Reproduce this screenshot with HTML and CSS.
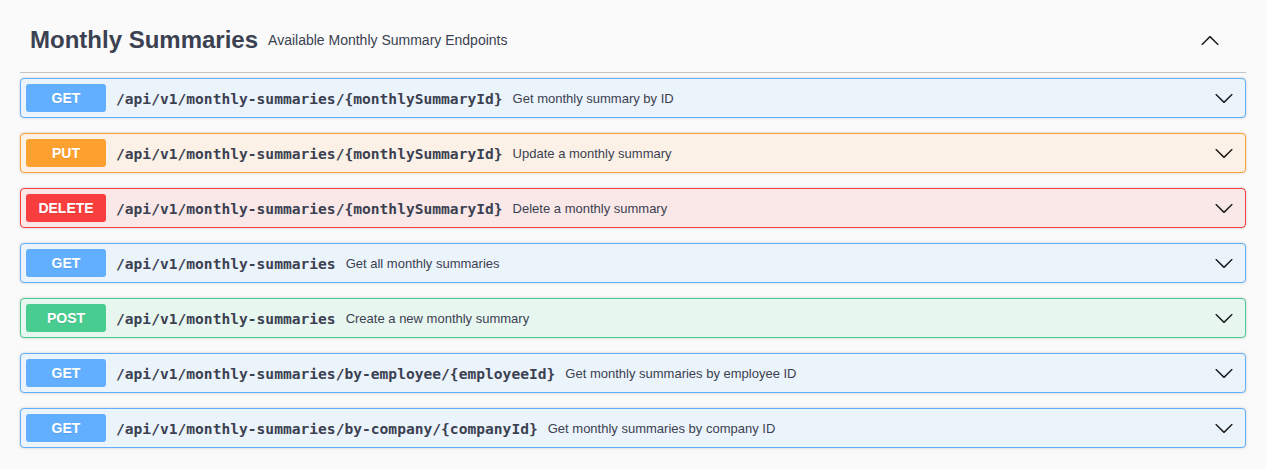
FILE: index.html
```html
<!DOCTYPE html>
<html>
<head>
<meta charset="utf-8">
<link rel="stylesheet" href="styles.css">
</head>
<body>
<div class="wrapper">
  <section class="tag-section">
    <h3 class="tag">
      <span class="tag-name">Monthly Summaries</span>
      <small class="tag-desc">Available Monthly Summary Endpoints</small>
      <button class="expand">
        <svg width="20" height="20" viewBox="0 0 20 20"><path d="M17.418 14.908c.272.268.709.268.979 0s.271-.701 0-.969l-7.908-7.83c-.27-.268-.707-.268-.979 0l-7.908 7.83c-.27.268-.27.701 0 .969.271.268.709.268.979 0L10 7.767l7.418 7.141z"/></svg>
      </button>
    </h3>
    <div class="ops">
      <div class="op get">
        <span class="method">GET</span>
        <span class="path">/api/v1/monthly-summaries/{monthlySummaryId}</span>
        <span class="desc">Get monthly summary by ID</span>
        <button class="arrow"><svg width="20" height="20" viewBox="0 0 20 20"><path d="M17.418 6.109c.272-.268.709-.268.979 0s.271.701 0 .969l-7.908 7.83c-.27.268-.707.268-.979 0l-7.908-7.83c-.27-.268-.27-.701 0-.969.271-.268.709-.268.979 0L10 13.25l7.418-7.141z"/></svg></button>
      </div>
      <div class="op put">
        <span class="method">PUT</span>
        <span class="path">/api/v1/monthly-summaries/{monthlySummaryId}</span>
        <span class="desc">Update a monthly summary</span>
        <button class="arrow"><svg width="20" height="20" viewBox="0 0 20 20"><path d="M17.418 6.109c.272-.268.709-.268.979 0s.271.701 0 .969l-7.908 7.83c-.27.268-.707.268-.979 0l-7.908-7.83c-.27-.268-.27-.701 0-.969.271-.268.709-.268.979 0L10 13.25l7.418-7.141z"/></svg></button>
      </div>
      <div class="op delete">
        <span class="method">DELETE</span>
        <span class="path">/api/v1/monthly-summaries/{monthlySummaryId}</span>
        <span class="desc">Delete a monthly summary</span>
        <button class="arrow"><svg width="20" height="20" viewBox="0 0 20 20"><path d="M17.418 6.109c.272-.268.709-.268.979 0s.271.701 0 .969l-7.908 7.83c-.27.268-.707.268-.979 0l-7.908-7.83c-.27-.268-.27-.701 0-.969.271-.268.709-.268.979 0L10 13.25l7.418-7.141z"/></svg></button>
      </div>
      <div class="op get">
        <span class="method">GET</span>
        <span class="path">/api/v1/monthly-summaries</span>
        <span class="desc">Get all monthly summaries</span>
        <button class="arrow"><svg width="20" height="20" viewBox="0 0 20 20"><path d="M17.418 6.109c.272-.268.709-.268.979 0s.271.701 0 .969l-7.908 7.83c-.27.268-.707.268-.979 0l-7.908-7.83c-.27-.268-.27-.701 0-.969.271-.268.709-.268.979 0L10 13.25l7.418-7.141z"/></svg></button>
      </div>
      <div class="op post">
        <span class="method">POST</span>
        <span class="path">/api/v1/monthly-summaries</span>
        <span class="desc">Create a new monthly summary</span>
        <button class="arrow"><svg width="20" height="20" viewBox="0 0 20 20"><path d="M17.418 6.109c.272-.268.709-.268.979 0s.271.701 0 .969l-7.908 7.83c-.27.268-.707.268-.979 0l-7.908-7.83c-.27-.268-.27-.701 0-.969.271-.268.709-.268.979 0L10 13.25l7.418-7.141z"/></svg></button>
      </div>
      <div class="op get">
        <span class="method">GET</span>
        <span class="path">/api/v1/monthly-summaries/by-employee/{employeeId}</span>
        <span class="desc">Get monthly summaries by employee ID</span>
        <button class="arrow"><svg width="20" height="20" viewBox="0 0 20 20"><path d="M17.418 6.109c.272-.268.709-.268.979 0s.271.701 0 .969l-7.908 7.83c-.27.268-.707.268-.979 0l-7.908-7.83c-.27-.268-.27-.701 0-.969.271-.268.709-.268.979 0L10 13.25l7.418-7.141z"/></svg></button>
      </div>
      <div class="op get">
        <span class="method">GET</span>
        <span class="path">/api/v1/monthly-summaries/by-company/{companyId}</span>
        <span class="desc">Get monthly summaries by company ID</span>
        <button class="arrow"><svg width="20" height="20" viewBox="0 0 20 20"><path d="M17.418 6.109c.272-.268.709-.268.979 0s.271.701 0 .969l-7.908 7.83c-.27.268-.707.268-.979 0l-7.908-7.83c-.27-.268-.27-.701 0-.969.271-.268.709-.268.979 0L10 13.25l7.418-7.141z"/></svg></button>
      </div>
    </div>
  </section>
</div>
</body>
</html>
```

FILE: styles.css
```css
html, body {
  margin: 0;
  padding: 0;
  background: #fafafa;
}
body {
  font-family: "Liberation Sans", Arial, sans-serif;
  color: #3b4151;
}
.wrapper {
  padding: 8px 20px 0;
}
.tag {
  display: flex;
  align-items: center;
  height: 65px;
  box-sizing: border-box;
  margin: 0 0 5px;
  padding: 0 20px 0 10px;
  border-bottom: 1px solid rgba(59, 65, 81, 0.3);
  font-size: 24px;
  font-weight: 700;
  color: #3b4151;
}
.tag-name {
  white-space: nowrap;
}
.tag-desc {
  flex: 1;
  font-size: 14px;
  font-weight: 400;
  padding: 0 10px;
}
.expand {
  border: none;
  background: none;
  padding: 0 6px 0 0;
  display: flex;
  align-items: center;
}
.expand svg, .arrow svg {
  fill: #1b1b1b;
  display: block;
}
.op {
  display: flex;
  align-items: center;
  height: 40px;
  box-sizing: border-box;
  margin: 0 0 15px;
  padding: 0 5px;
  border: 1px solid;
  border-radius: 4px;
  box-shadow: 0 0 3px rgba(0, 0, 0, 0.19);
}
.method {
  min-width: 80px;
  height: 28px;
  line-height: 28px;
  text-align: center;
  border-radius: 3px;
  color: #fff;
  font-size: 14px;
  font-weight: 700;
  text-shadow: 0 1px 0 rgba(0, 0, 0, 0.1);
}
.path {
  padding: 0 10px;
  font-family: "DejaVu Sans Mono", monospace;
  font-size: 14.6px;
  font-weight: 700;
  color: #3b4151;
  white-space: nowrap;
}
.desc {
  flex: 1;
  font-size: 13px;
  color: #3b4151;
}
.arrow {
  border: none;
  background: none;
  padding: 0 6px 0 0;
  display: flex;
  align-items: center;
}
.get { background: #ebf3fb; border-color: #61affe; }
.get .method { background: #61affe; }
.put { background: #fbf1e6; border-color: #fca130; }
.put .method { background: #fca130; }
.delete { background: #fae7e7; border-color: #f93e3e; }
.delete .method { background: #f93e3e; }
.post { background: #e8f6f0; border-color: #49cc90; }
.post .method { background: #49cc90; }
```
